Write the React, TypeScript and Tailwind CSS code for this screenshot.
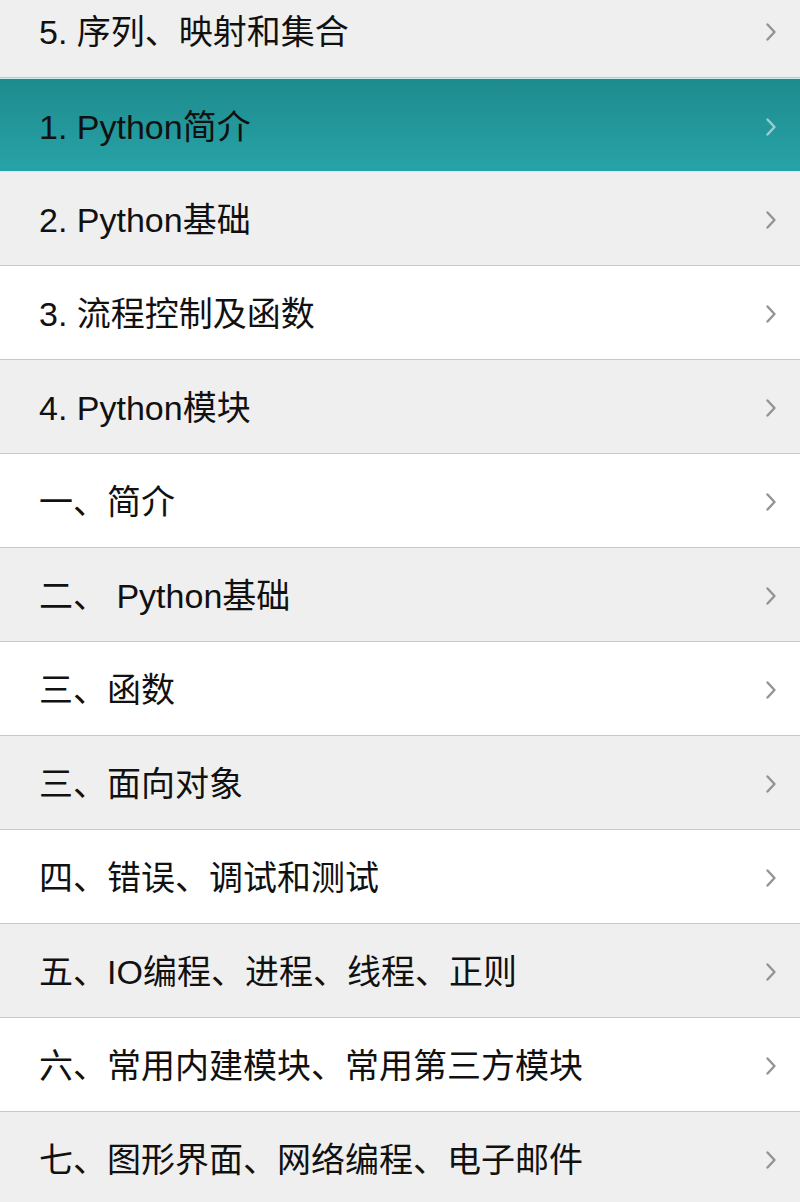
const items: { label: string; tone: 'gray' | 'white' | 'active' }[] = [
  { label: '5. 序列、映射和集合', tone: 'gray' },
  { label: '1. Python简介', tone: 'active' },
  { label: '2. Python基础', tone: 'gray' },
  { label: '3. 流程控制及函数', tone: 'white' },
  { label: '4. Python模块', tone: 'gray' },
  { label: '一、简介', tone: 'white' },
  { label: '二、 Python基础', tone: 'gray' },
  { label: '三、函数', tone: 'white' },
  { label: '三、面向对象', tone: 'gray' },
  { label: '四、错误、调试和测试', tone: 'white' },
  { label: '五、IO编程、进程、线程、正则', tone: 'gray' },
  { label: '六、常用内建模块、常用第三方模块', tone: 'white' },
  { label: '七、图形界面、网络编程、电子邮件', tone: 'gray' },
]

function Chevron({ light }: { light?: boolean }) {
  return (
    <svg width="14" height="22" viewBox="0 0 14 22" className="shrink-0">
      <polyline
        points="3.5,3.5 10.5,11 3.5,18.5"
        fill="none"
        stroke={light ? '#9ccfd0' : '#939393'}
        strokeWidth="2.4"
        strokeLinecap="round"
        strokeLinejoin="round"
      />
    </svg>
  )
}

export default function App() {
  return (
    <div className="h-[1202px] w-[800px] overflow-hidden bg-white font-['Liberation_Sans','Noto_Sans_CJK_SC',sans-serif]">
      <div className="-mt-[16px] flex flex-col">
        {items.map((item, i) => {
          const active = item.tone === 'active'
          return (
            <div
              key={i}
              className={
                active
                  ? 'flex h-[94px] shrink-0 items-center justify-between border-y border-[#c6ecee] bg-gradient-to-b from-[#1e8b8e] to-[#27a3a7] pl-[39px] pr-[22px] pt-[3px]'
                  : item.tone === 'gray'
                    ? 'flex h-[94px] shrink-0 items-center justify-between border-b border-[#c8c8c8] bg-[#efefef] pl-[39px] pr-[22px] pt-[3px]'
                    : 'flex h-[94px] shrink-0 items-center justify-between border-b border-[#c8c8c8] bg-white pl-[39px] pr-[22px] pt-[3px]'
              }
            >
              <span className="text-[34px] leading-none text-[#111]">{item.label}</span>
              <Chevron light={active} />
            </div>
          )
        })}
      </div>
    </div>
  )
}
